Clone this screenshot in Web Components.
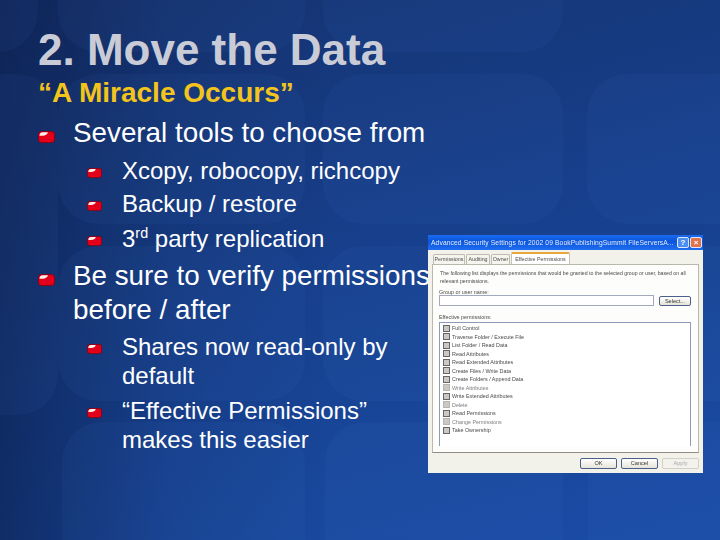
<!DOCTYPE html>
<html lang="en">
<head>
<meta charset="utf-8">
<title>2. Move the Data</title>
<style>
  html, body { margin: 0; padding: 0; background: #14357a; }
</style>
</head>
<body>
<slide-stage>
  <slide-title>2. Move the Data</slide-title>
  <slide-subtitle>“A Miracle Occurs”</slide-subtitle>
  <slide-point level="1" style="margin-top:8px">Several tools to choose from</slide-point>
  <slide-point level="2" style="margin-top:6px">Xcopy, robocopy, richcopy</slide-point>
  <slide-point level="2" style="margin-top:4.6px">Backup / restore</slide-point>
  <slide-point level="2" style="margin-top:5.8px">3<sup>rd</sup> party replication</slide-point>
  <slide-point level="1" style="margin-top:6px">Be sure to verify permissions before / after</slide-point>
  <slide-point level="2" style="margin-top:5.5px">Shares now read-only by default</slide-point>
  <slide-point level="2" style="margin-top:6px">“Effective Permissions” makes this easier</slide-point>
  <xp-dialog slot="over"></xp-dialog>
</slide-stage>

<script>
// ── Slide background + stage ────────────────────────────────────────────────

const TILES = [
  [-60, -60, 98, 112], [58, -60, 247, 112], [323, -60, 240, 112],
  [-60, 74, 118, 341], [58, 74, 247, 150], [323, 74, 240, 150], [587, 74, 200, 150],
  [58, 246, 247, 155], [323, 246, 240, 155], [587, 246, 200, 155],
  [62, 422, 243, 180], [325, 422, 238, 180], [588, 422, 200, 180],
];

class SlideStage extends HTMLElement {
  constructor() {
    super();
    const tiles = TILES.map(([x, y, w, h]) =>
      `<rect x="${x}" y="${y}" width="${w}" height="${h}" rx="40" fill="#5f8fe6" fill-opacity=".055"/>`).join('');
    this.attachShadow({ mode: 'open' }).innerHTML = `
      <style>
        :host {
          display: block; position: relative; overflow: hidden;
          width: 720px; height: 540px; box-sizing: border-box;
          padding: 24px 0 0 38px;
          background:
            linear-gradient(90deg, rgba(10,28,70,.6) 0, rgba(10,28,70,.15) 170px, rgba(10,28,70,0) 330px),
            linear-gradient(165deg, #15326f 0, #17408d 50%, #1a4ca6 100%);
        }
        svg { position: absolute; inset: 0; }
        .flow { position: relative; }
      </style>
      <svg width="720" height="540" viewBox="0 0 720 540" aria-hidden="true">${tiles}</svg>
      <div class="flow"><slot></slot></div>
      <slot name="over"></slot>`;
  }
}

class SlideTitle extends HTMLElement {
  constructor() {
    super();
    this.attachShadow({ mode: 'open' }).innerHTML = `
      <style>
        :host {
          display: block; font: bold 44px/52px "Liberation Sans", Arial, sans-serif;
          color: #c9ccd7;
        }
      </style><slot></slot>`;
  }
}

class SlideSubtitle extends HTMLElement {
  constructor() {
    super();
    this.attachShadow({ mode: 'open' }).innerHTML = `
      <style>
        :host {
          display: block; margin-top: 1.5px;
          font: bold 28px/30px "Liberation Sans", Arial, sans-serif;
          color: #f3c41c;
        }
      </style><slot></slot>`;
  }
}

// level 1 and 2 share the glossy red pill, only the sizes differ
class SlidePoint extends HTMLElement {
  constructor() {
    super();
    this.attachShadow({ mode: 'open' }).innerHTML = `
      <style>
        :host {
          display: grid; font-family: "Liberation Sans", Arial, sans-serif;
          color: #fff; align-items: start;
        }
        :host([level="1"]) {
          grid-template-columns: 35px 1fr; width: 402px;
          font-size: 27.8px; line-height: 34px;
        }
        :host([level="2"]) {
          grid-template-columns: 35px 1fr; width: 324px; margin-left: 49px;
          font-size: 24px; line-height: 29px;
        }
        svg { display: block; }
        :host([level="1"]) svg { width: 17px; height: 12px; margin-top: 15.5px; }
        :host([level="2"]) svg { width: 15px; height: 10px; margin-top: 12px; }
        ::slotted(sup) { font-size: 60%; line-height: 0; }
      </style>
      <svg viewBox="0 0 17 12" preserveAspectRatio="none" aria-hidden="true">
        <rect x=".5" y=".5" width="16" height="11" rx="3" fill="#e2001a" stroke="#8a0012"/>
        <path d="M1.5 4.8 Q1.5 1.2 4.6 1.2 H10 Q9.6 3.8 6.6 4.4 Q3.6 5 1.5 4.8Z" fill="#fff0ec"/>
      </svg>
      <div><slot></slot></div>`;
  }
}

// ── Screenshot of the Windows XP dialog ─────────────────────────────────────

const PERMS = [
  ['Full Control', 1], ['Traverse Folder / Execute File', 1], ['List Folder / Read Data', 1],
  ['Read Attributes', 1], ['Read Extended Attributes', 1], ['Create Files / Write Data', 1],
  ['Create Folders / Append Data', 1], ['Write Attributes', 0], ['Write Extended Attributes', 1],
  ['Delete', 0], ['Read Permissions', 1], ['Change Permissions', 0], ['Take Ownership', 1],
];

class XpDialog extends HTMLElement {
  constructor() {
    super();
    const rows = PERMS.map(([name, on]) =>
      `<div class="row${on ? '' : ' off'}"><i></i><span>${name}</span></div>`).join('');
    this.attachShadow({ mode: 'open' }).innerHTML = `
      <style>
        :host {
          display: flex; flex-direction: column;
          position: absolute; left: 428px; top: 235px; width: 275px; height: 238px;
          box-sizing: border-box; background: #f2f1ea;
          font: 5.4px/8px "Liberation Sans", Arial, sans-serif; color: #4a4a4a;
          filter: blur(.35px);
        }
        .bar {
          flex: none; display: flex; align-items: center; gap: 1px; height: 15px; padding: 0 1px 0 3px;
          background: linear-gradient(180deg, #1a6cf0 0, #0a55dc 40%, #1f6df0 100%);
          color: #e4ecfb; font-size: 6.7px; white-space: nowrap;
        }
        .bar .t { flex: 1; min-width: 0; letter-spacing: .12px; }
        .cap { flex: none; box-sizing: border-box; width: 12px; height: 11px; border: 1px solid #dfe8fa; border-radius: 2px;
          font: bold 8px/9px "Liberation Sans", sans-serif; text-align: center; color: #fff; background: #4d8ff0; }
        .cap.x { background: #e0734d; }
        .tabs { flex: none; display: flex; align-items: flex-end; gap: 1px; height: 14px; padding-left: 5px; }
        .tab { box-sizing: border-box; height: 10px; border: 1px solid #bdbcb0; border-bottom: 0; border-radius: 2px 2px 0 0;
          font-size: 5.3px; line-height: 9px; text-align: center; background: #f5f4ee; white-space: nowrap; }
        .tab.on { height: 12px; line-height: 10px; background: #fff; border-top: 2px solid #e9a63a; border-color: #e9a63a #c4c3b6 #fff; }
        .panel { flex: 1; display: flex; flex-direction: column; margin: 0 4px; padding: 5px 7px 6px 6px;
          background: #fdfdfb; border: 1px solid #b9b8ab; border-bottom: 1px solid #8f8e84; min-height: 0; }
        .intro { margin: 0 0 0 1px; font-size: 5.2px; line-height: 7.5px; }
        .lbl { margin: 3px 0 0; }
        .lbl.second { margin-top: 7px; }
        .pick { display: flex; gap: 5px; margin-top: -1px; }
        .box { flex: 1; height: 9px; border: 1px solid #a3a8bd; background: #fff; }
        .btn { display: block; box-sizing: border-box; width: 32px; height: 11px; border: 1px solid #4c5f8c; border-radius: 2px;
          background: linear-gradient(#fff, #e6e4d8); font-size: 5.6px; line-height: 9px; text-align: center; color: #333; }
        .pick .btn { margin-top: 1px; height: 10px; line-height: 8px; }
        .list { flex: 1; margin-top: 1px; padding-top: 1px; border: 1px solid #8d9bb8; border-bottom: 0; background: #fff; }
        .row { display: flex; align-items: center; gap: 2px; height: 8.53px; padding-left: 3px; white-space: nowrap; }
        .row i { width: 5px; height: 5px; border: 1px solid #666; background: #c9c9c4; }
        .row.off { color: #7d7d7d; }
        .row.off i { border-color: #b5b5b0; }
        .foot { flex: none; display: flex; justify-content: flex-end; gap: 4px; height: 20px; align-items: center; padding-right: 4px; }
        .foot .btn { width: 37px; height: 11px; }
        .foot .btn.off { border-color: #d2d1c6; color: #aaa; background: #f3f2ec; }
      </style>
      <div class="bar">
        <span class="t">Advanced Security Settings for 2002 09 BookPublishingSummit FileServersA...</span>
        <span class="cap">?</span><span class="cap x">×</span>
      </div>
      <div class="tabs">
        <span class="tab" style="width:32px">Permissions</span><span class="tab" style="width:24px">Auditing</span><span class="tab" style="width:19px">Owner</span>
        <span class="tab on" style="width:59px">Effective Permissions</span>
      </div>
      <div class="panel">
        <p class="intro">The following list displays the permissions that would be granted to the selected group or user, based on all relevant permissions.</p>
        <p class="lbl">Group or user name:</p>
        <div class="pick"><div class="box"></div><span class="btn">Select...</span></div>
        <p class="lbl second">Effective permissions:</p>
        <div class="list">${rows}</div>
      </div>
      <div class="foot">
        <span class="btn">OK</span><span class="btn">Cancel</span><span class="btn off">Apply</span>
      </div>`;
  }
}

customElements.define('slide-stage', SlideStage);
customElements.define('slide-title', SlideTitle);
customElements.define('slide-subtitle', SlideSubtitle);
customElements.define('slide-point', SlidePoint);
customElements.define('xp-dialog', XpDialog);
</script>
</body>
</html>
